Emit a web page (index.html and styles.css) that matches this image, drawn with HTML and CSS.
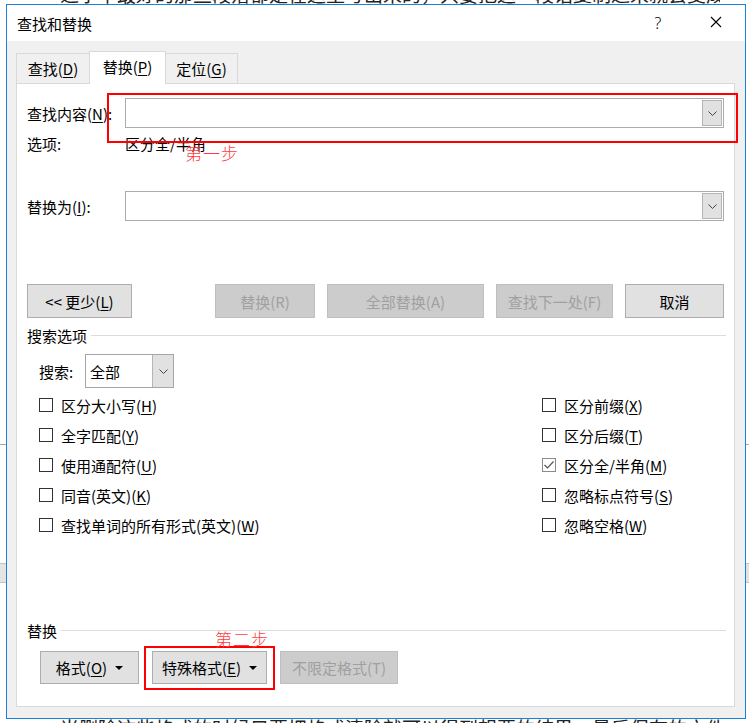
FILE: index.html
```html
<!DOCTYPE html>
<html lang="zh-CN">
<head>
  <meta charset="UTF-8">
  <meta name="viewport" content="width=device-width, initial-scale=1">
  <title>查找和替换</title>
  <link rel="stylesheet" href="styles.css">
</head>
<body>

  <!-- 背后的文档 -->
  <div class="doc">
    <div class="doc-top"><p>之字中最好的那些段落都是在这里写出来的，只要把这一段话复制过来就会变成好的格式</p></div>
    <div class="doc-rule"></div>
    <div class="doc-bar"></div>
    <div class="doc-bottom"><p>当删除这些格式的时候只要把格式清除就可以得到想要的结果，最后保存的文件也就好了</p></div>
  </div>

  <div class="dialog">
    <div class="titlebar">
      <span class="title">查找和替换</span>
      <span class="help">?</span>
      <span class="close">
        <svg width="12" height="12" viewBox="0 0 12 12"><path d="M1 1 L11 11 M11 1 L1 11" stroke="#000" stroke-width="1.1" fill="none"/></svg>
      </span>
    </div>

    <div class="client">
      <div class="tabs">
        <div class="tab">查找(<u>D</u>)</div>
        <div class="tab active">替换(<u>P</u>)</div>
        <div class="tab last">定位(<u>G</u>)</div>
      </div>

      <div class="panel">
        <div class="field first">
          <span class="label">查找内容(<u>N</u>):</span>
          <div class="combo">
            <span class="combo-btn"><svg width="9" height="5" viewBox="0 0 9 5"><polyline points="0.5,0.5 4.5,4.5 8.5,0.5" stroke="#444" fill="none"/></svg></span>
          </div>
        </div>

        <div class="options">
          <span class="label">选项:</span>
          <span>区分全/半角</span>
        </div>

        <div class="field second">
          <span class="label">替换为(<u>I</u>):</span>
          <div class="combo">
            <span class="combo-btn"><svg width="9" height="5" viewBox="0 0 9 5"><polyline points="0.5,0.5 4.5,4.5 8.5,0.5" stroke="#444" fill="none"/></svg></span>
          </div>
        </div>

        <div class="actions">
          <button class="btn w105">&lt;&lt; 更少(<u>L</u>)</button>
          <div class="spacer"></div>
          <button class="btn disabled w100">替换(R)</button>
          <button class="btn disabled w157">全部替换(A)</button>
          <button class="btn disabled w117">查找下一处(F)</button>
          <button class="btn w99">取消</button>
        </div>

        <div class="section search-head">搜索选项</div>

        <div class="search-row">
          <span class="search-label">搜索:</span>
          <div class="select">
            <span class="select-text">全部</span>
            <span class="select-btn"><svg width="9" height="5" viewBox="0 0 9 5"><polyline points="0.5,0.5 4.5,4.5 8.5,0.5" stroke="#444" fill="none"/></svg></span>
          </div>
        </div>

        <div class="checks">
          <div class="check"><span class="box"></span>区分大小写(<u>H</u>)</div>
          <div class="check"><span class="box"></span>区分前缀(<u>X</u>)</div>
          <div class="check"><span class="box"></span>全字匹配(<u>Y</u>)</div>
          <div class="check"><span class="box"></span>区分后缀(<u>T</u>)</div>
          <div class="check"><span class="box"></span>使用通配符(<u>U</u>)</div>
          <div class="check"><span class="box checked"><svg width="12" height="12" viewBox="0 0 12 12"><polyline points="1.5,6 4.5,9 10.5,2.5" stroke="#555" stroke-width="1.2" fill="none"/></svg></span>区分全/半角(<u>M</u>)</div>
          <div class="check"><span class="box"></span>同音(英文)(<u>K</u>)</div>
          <div class="check"><span class="box"></span>忽略标点符号(<u>S</u>)</div>
          <div class="check"><span class="box"></span>查找单词的所有形式(英文)(<u>W</u>)</div>
          <div class="check"><span class="box"></span>忽略空格(<u>W</u>)</div>
        </div>

        <div class="section replace-head">替换</div>

        <div class="format-row">
          <button class="btn w99">格式(<u>O</u>)<span class="caret"></span></button>
          <button class="btn w115">特殊格式(<u>E</u>)<span class="caret"></span></button>
          <button class="btn disabled w118">不限定格式(T)</button>
        </div>
      </div>
    </div>
  </div>

  <!-- 标注 -->
  <div class="mark mark-one"></div>
  <div class="note note-one">第一步</div>
  <div class="mark mark-two"></div>
  <div class="note note-two">第二步</div>

</body>
</html>
```

FILE: styles.css
```css
* {
  box-sizing: border-box;
}
body {
  margin: 0;
  width: 749px;
  height: 723px;
  overflow: hidden;
  position: relative;
  background: #fff;
  font-family: "Noto Sans CJK SC", sans-serif;
  font-size: 15px;
  color: #000;
}
u {
  text-decoration-thickness: 1px;
  text-underline-offset: 2px;
}

/* 背后的文档 */
.doc {
  width: 749px;
  overflow: hidden;
}
.doc-top {
  height: 4px;
  overflow: hidden;
}
.doc-top p,
.doc-bottom p {
  margin: 0;
  padding-left: 60px;
  width: 720px;
  overflow: hidden;
  font-size: 19px;
  line-height: 20px;
  color: #222;
  white-space: nowrap;
}
.doc-top p {
  margin-top: -16px;
}
.doc-rule {
  margin-top: 440px;
  height: 1px;
  background: #a8a8a8;
}
.doc-bar {
  margin-top: 118px;
  height: 20px;
  background: #e4e4e4;
  border-top: 1px solid #c4c4c4;
  border-bottom: 1px solid #c4c4c4;
}
.doc-bottom {
  margin-top: 135px;
}

/* 对话框 */
.dialog {
  position: absolute;
  left: 6px;
  top: 4px;
  width: 740px;
  height: 715px;
  border: 1px solid #1a82d8;
  background: #f0f0f0;
  display: flex;
  flex-direction: column;
}
.titlebar {
  height: 36px;
  background: #fff;
  display: flex;
  align-items: center;
  padding: 0 14px 0 10px;
}
.title {
  font-size: 15px;
}
.help {
  margin-left: auto;
  width: 20px;
  text-align: center;
  font-size: 16px;
  font-family: "Noto Sans", sans-serif;
  font-weight: 300;
  margin-right: 33px;
}
.close {
  width: 30px;
  height: 14px;
  display: flex;
  justify-content: center;
}
.client {
  flex: 1;
  display: flex;
  flex-direction: column;
  padding: 10px 10px 11px 9px;
}

.tabs {
  display: flex;
  align-items: flex-end;
  height: 32px;
}
.tab {
  width: 74px;
  height: 30px;
  border: 1px solid #d9d9d9;
  border-bottom: none;
  display: flex;
  align-items: center;
  justify-content: center;
  padding-bottom: 1px;
}
.tab.active {
  width: 77px;
  height: 33px;
  margin: 0 -1px -1px;
  background: #fff;
  position: relative;
  z-index: 1;
  padding-bottom: 3px;
}
.tab.last {
  width: 73px;
}

.panel {
  flex: 1;
  background: #fff;
  border: 1px solid #d9d9d9;
  padding: 0 10px;
}
.field {
  display: flex;
  align-items: center;
  height: 30px;
}
.field.first {
  margin-top: 14px;
}
.field.second {
  margin-top: 38px;
}
.label {
  width: 98px;
  flex: none;
}
.combo {
  flex: 1;
  height: 30px;
  border: 1px solid #acacac;
  display: flex;
  justify-content: flex-end;
  padding: 1px;
}
.combo-btn,
.select-btn {
  width: 20px;
  background: #e1e1e1;
  border: 1px solid #b5b5b5;
  display: flex;
  align-items: center;
  justify-content: center;
}
.options {
  display: flex;
  align-items: center;
  margin-top: 5px;
  height: 20px;
}

.actions {
  display: flex;
  gap: 12px;
  margin-top: 63px;
  height: 34px;
}
.spacer {
  flex: 1;
}
.btn {
  height: 100%;
  background: #e1e1e1;
  border: 1px solid #adadad;
  font-family: inherit;
  font-size: 15px;
  color: #000;
  padding: 0;
  display: flex;
  align-items: center;
  justify-content: center;
}
.btn.disabled {
  background: #cccccc;
  border-color: #bfbfbf;
  color: #a0a0a0;
}
.w99 { width: 99px; }
.w100 { width: 100px; }
.w105 { width: 105px; }
.w115 { width: 115px; }
.w117 { width: 117px; }
.w118 { width: 118px; }
.w157 { width: 157px; }
.caret {
  margin-left: 8px;
  border-left: 4px solid transparent;
  border-right: 4px solid transparent;
  border-top: 4px solid #000;
}

.section {
  display: flex;
  align-items: center;
  height: 20px;
}
.section::after {
  content: "";
  flex: 1;
  height: 1px;
  background: #dcdcdc;
  margin-left: 4px;
  margin-right: -2px;
}
.search-head {
  margin-top: 7px;
}
.replace-head {
  margin-top: 80px;
}

.search-row {
  display: flex;
  align-items: center;
  margin-top: 9px;
  height: 34px;
  padding-left: 12px;
}
.search-label {
  width: 46px;
}
.select {
  width: 89px;
  height: 34px;
  border: 1px solid #a6a6a6;
  display: flex;
}
.select-text {
  flex: 1;
  display: flex;
  align-items: center;
  padding-left: 4px;
}
.select-btn {
  width: 21px;
  border: none;
  border-left: 1px solid #b5b5b5;
}

.checks {
  display: grid;
  grid-template-columns: 503px 1fr;
  grid-auto-rows: 30px;
  margin-top: 2px;
  padding-left: 12px;
}
.check {
  display: flex;
  align-items: center;
}
.box {
  width: 14px;
  height: 14px;
  border: 1px solid #333;
  margin-right: 8px;
  display: flex;
  align-items: center;
  justify-content: center;
}
.box.checked {
  border-color: #8a8a8a;
}

.format-row {
  display: flex;
  gap: 13px;
  margin-top: 11px;
  height: 33px;
  padding-left: 13px;
}

/* 红色标注 */
.mark {
  position: absolute;
  border: 2px solid #ff0000;
  z-index: 5;
}
.mark-one {
  left: 107px;
  top: 93px;
  width: 631px;
  height: 50px;
}
.mark-two {
  left: 144px;
  top: 646px;
  width: 131px;
  height: 44px;
}
.note {
  position: absolute;
  z-index: 5;
  color: #ff3b3b;
  font-size: 17px;
  line-height: 18px;
  font-weight: 300;
  letter-spacing: 1px;
}
.note-one {
  left: 185px;
  top: 144px;
}
.note-two {
  left: 215px;
  top: 630px;
}
```
